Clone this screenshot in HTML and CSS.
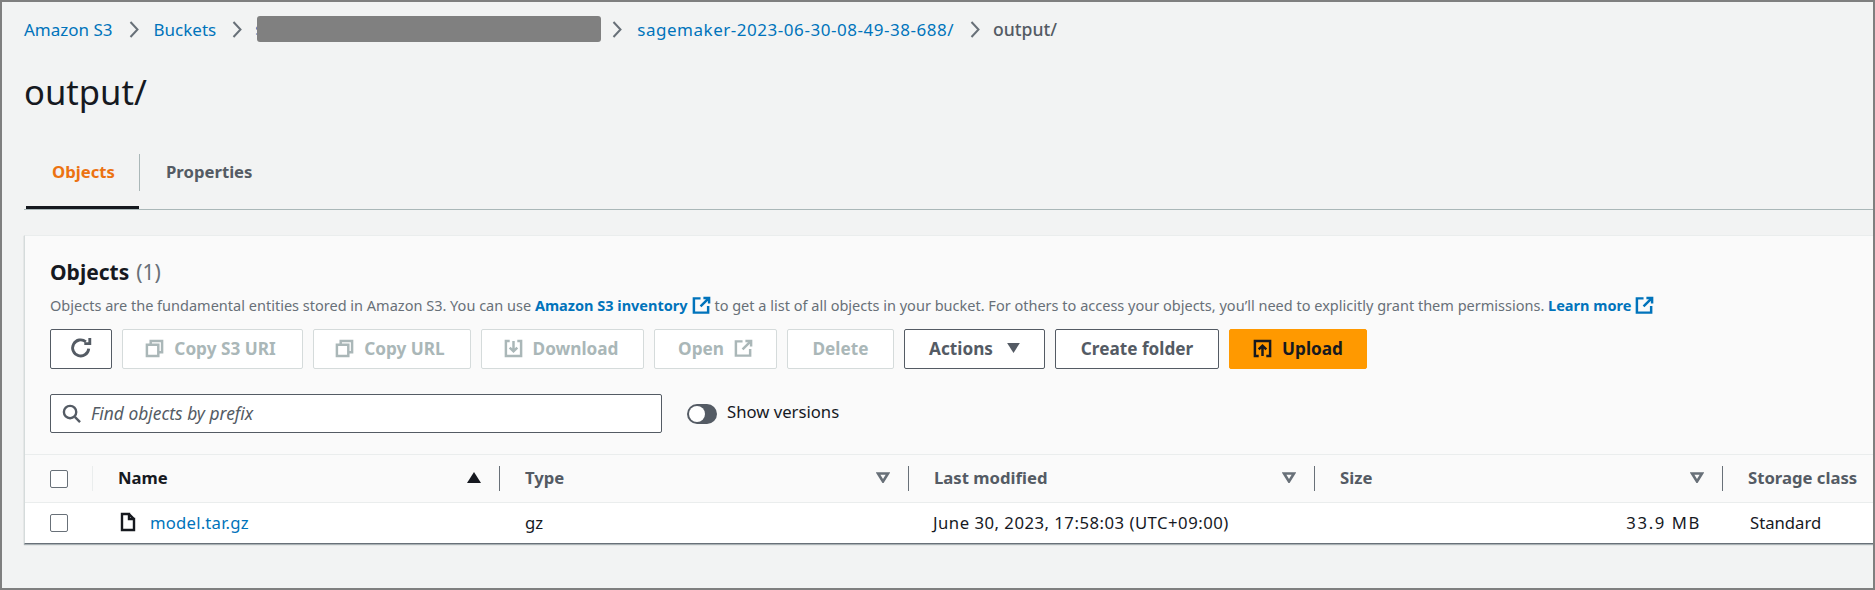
FILE: index.html
```html
<!DOCTYPE html>
<html lang="en">
<head>
<meta charset="utf-8">
<title>output/ - S3 bucket</title>
<link rel="stylesheet" href="styles.css">
</head>
<body>
<div class="frame">
  <nav class="crumbs">
    <a class="link">Amazon S3</a>
    <svg class="chev" viewBox="0 0 10 17"><path d="M1.5 1l7 7.5-7 7.5"/></svg>
    <a class="link">Buckets</a>
    <svg class="chev" viewBox="0 0 10 17"><path d="M1.5 1l7 7.5-7 7.5"/></svg>
    <span class="redact-wrap"><a class="link">s</a><span class="redact"></span></span>
    <svg class="chev" viewBox="0 0 10 17"><path d="M1.5 1l7 7.5-7 7.5"/></svg>
    <a class="link link-wide">sagemaker-2023-06-30-08-49-38-688/</a>
    <svg class="chev" viewBox="0 0 10 17"><path d="M1.5 1l7 7.5-7 7.5"/></svg>
    <span class="crumb-current">output/</span>
  </nav>
  <h1 class="title">output/</h1>
  <div class="tabs">
    <div class="tab tab-active"><span class="tab-label">Objects</span></div>
    <div class="tab"><span class="tab-label tab-next">Properties</span></div>
  </div>
  <section class="card">
    <div class="card-head">
      <h2 class="heading">Objects <span class="count">(1)</span></h2>
      <p class="desc">Objects are the fundamental entities stored in Amazon S3. You can use <a class="strong-link">Amazon S3 inventory</a><svg class="ext" viewBox="0 0 20 20"><path d="M9 2.5H2v15h15v-7M12 2h6v6M18 2L9 11"/></svg> to get a list of all objects in your bucket. For others to access your objects, you’ll need to explicitly grant them permissions. <a class="strong-link">Learn more</a><svg class="ext" viewBox="0 0 20 20"><path d="M9 2.5H2v15h15v-7M12 2h6v6M18 2L9 11"/></svg></p>
      <div class="actions">
        <button class="btn btn-icon"><svg class="ico ico-refresh" viewBox="0 0 20 20"><path d="M17 10.5a7.3 7.3 0 1 1-2.6-6.2M18 1v5h-5"/></svg></button>
        <button class="btn off w-s3"><svg class="ico" viewBox="0 0 20 20"><path d="M2 6h12v12H2zM6 6V2h12v12h-4"/></svg>Copy S3 URI</button>
        <button class="btn off w-url"><svg class="ico" viewBox="0 0 20 20"><path d="M2 6h12v12H2zM6 6V2h12v12h-4"/></svg>Copy URL</button>
        <button class="btn off w-dl"><svg class="ico" viewBox="0 0 20 20"><path d="M6 2H2v16h16V2h-4M10 2v11M6 9l4 4 4-4"/></svg>Download</button>
        <button class="btn off w-open">Open<svg class="ico" viewBox="0 0 20 20"><path d="M9 2.5H2v15h15v-7M12 2h6v6M18 2L9 11"/></svg></button>
        <button class="btn off w-del">Delete</button>
        <button class="btn on w-act">Actions<svg class="caret" viewBox="0 0 14 11"><path d="M0 0h14L7 11z"/></svg></button>
        <button class="btn on w-new">Create folder</button>
        <button class="btn primary w-up"><svg class="ico" viewBox="0 0 20 20"><path d="M6 18H2V2h16v16h-4M10 18V7M6 11l4-4 4 4"/></svg>Upload</button>
      </div>
      <div class="filters">
        <div class="search">
          <svg class="search-ico" viewBox="0 0 20 20"><circle cx="8.5" cy="8.5" r="6.5"/><path d="M13.5 13.5L19 19"/></svg>
          <span class="placeholder">Find objects by prefix</span>
        </div>
        <div class="toggle"><span class="knob"></span></div>
        <span class="toggle-label">Show versions</span>
      </div>
    </div>
    <div class="row thead">
      <div class="cell c-check"><span class="check"></span></div>
      <div class="cell c-name th-main">Name<svg class="sort" viewBox="0 0 14 11"><path d="M7 0l7 11H0z"/></svg></div>
      <div class="cell th">Type<svg class="filter" viewBox="0 0 14 11"><path d="M2 1.5h10L7 9.5z"/></svg></div>
      <div class="cell th">Last modified<svg class="filter" viewBox="0 0 14 11"><path d="M2 1.5h10L7 9.5z"/></svg></div>
      <div class="cell th">Size<svg class="filter" viewBox="0 0 14 11"><path d="M2 1.5h10L7 9.5z"/></svg></div>
      <div class="cell th last">Storage class</div>
    </div>
    <div class="row tbody">
      <div class="cell c-check plain"><span class="check"></span></div>
      <div class="cell c-file plain"><svg class="file" viewBox="0 0 16 20"><path d="M2 2h7v5h5v11H2zM9 2l5 5"/></svg><a class="link link-file">model.tar.gz</a></div>
      <div class="cell plain td">gz</div>
      <div class="cell plain td td-date">June 30, 2023, 17:58:03 (UTC+09:00)</div>
      <div class="cell plain td td-right">33.9 MB</div>
      <div class="cell plain td td-last">Standard</div>
    </div>
  </section>
</div>
</body>
</html>
```
FILE: styles.css
```css
* { box-sizing: border-box; }
html, body { margin: 0; padding: 0; }
body { font-family: "Noto Sans", "Liberation Sans", sans-serif; font-size: 16.7px; color: #16191f; }
.frame {
  width: 1875px; height: 590px; overflow: hidden;
  border: 2px solid #7f7f7f; background: #f2f3f3;
  padding: 14px 0 0 22px;
}
.link { color: #0073bb; white-space: nowrap; }
.link-file { letter-spacing: .2px; }
.crumbs { display: flex; align-items: center; height: 26px; font-size: 17px; }
.chev { width: 10px; height: 17px; margin: 0 15px 0 16px; flex: none; }
.chev path { fill: none; stroke: #687078; stroke-width: 2; }
.link-wide { letter-spacing: .53px; }
.redact-wrap { position: relative; width: 341px; height: 26px; line-height: 26px; margin-left: -2px; }
.redact { position: absolute; left: 2px; top: 0; width: 344px; height: 26px; background: #808080; border-radius: 3px; }
.crumb-current { color: #545b64; font-weight: 500; font-size: 17.6px; margin-left: -2px; }
.title { margin: 28px 0 0; height: 44px; font-size: 34.6px; line-height: 44px; font-weight: 400; }
.tabs { margin-top: 29px; height: 67px; display: flex; border-bottom: 1px solid #aab7b8; padding-left: 2px; }
.tab { height: 66px; padding: 11px 0 0; font-weight: 700; color: #545b64; }
.tab-active { width: 113px; border-bottom: 3px solid #16191f; color: #ec7211; }
.tab-label { display: flex; align-items: center; height: 37px; padding: 0 0 2px 26px; }
.tab-next { border-left: 1px solid #aab7b8; }
.card {
  margin-top: 25px; background: #fafafa; height: 309px;
  border-top: 1px solid #eaeded; border-left: 1px solid #d5dbdb;
  border-bottom: 1px solid #687078;
  box-shadow: 0 1px 1px rgba(0,28,36,.3);
}
.card-head { padding: 22px 0 0 25px; height: 218px; }
.heading { margin: 0; height: 28px; line-height: 28px; font-size: 21px; font-weight: 700; word-spacing: 1.5px; }
.count { font-weight: 400; color: #687078; }
.desc { margin: 8px 0 0; height: 24px; line-height: 22px; font-size: 14.53px; color: #687078; white-space: nowrap; }
.strong-link { color: #0073bb; font-weight: 700; }
.ext { width: 19px; height: 19px; vertical-align: -4px; margin-left: 4px; }
.ext path { fill: none; stroke: #0073bb; stroke-width: 2.6; }
.actions { margin-top: 11px; display: flex; gap: 10px; height: 40px; }
.btn {
  height: 40px; padding: 0 0 2px; display: flex; align-items: center; justify-content: center; gap: 10px;
  font: 700 17.2px "Noto Sans", "Liberation Sans", sans-serif; border-radius: 2px; background: transparent;
  border: 1px solid #545b64; color: #545b64;
}
.btn-icon { width: 62px; background: #fff; }
.ico { width: 19px; height: 19px; flex: none; }
.ico path { fill: none; stroke: currentColor; stroke-width: 2.6; }
.ico-refresh { width: 22px; height: 22px; }
.off { border-color: #d5dbdb; color: #aab7b8; background: #fff; }
.on { background: #fff; }
.primary { background: #f90; border-color: #f90; color: #16191f; }
.w-s3 { width: 181px; padding-right: 4px; } .w-url { width: 158px; padding-right: 4px; } .w-dl { width: 163px; padding-right: 3px; } .w-open { width: 123px; }
.w-del { width: 107px; } .w-act { width: 141px; gap: 14px; } .w-new { width: 164px; } .w-up { width: 138px; }
.caret { width: 13px; height: 10px; fill: #545b64; }
.filters { margin-top: 25px; display: flex; align-items: center; height: 39px; }
.search {
  width: 612px; height: 39px; background: #fff; border: 1px solid #545b64; border-radius: 2px;
  display: flex; align-items: center; padding: 0 0 1px 11px; gap: 10px;
}
.search-ico { width: 19px; height: 19px; flex: none; }
.search-ico circle, .search-ico path { fill: none; stroke: #545b64; stroke-width: 2.5; }
.placeholder { font-style: italic; color: #545b64; font-size: 17.4px; }
.toggle { width: 30px; height: 20px; margin-left: 25px; border-radius: 10px; background: #545b64; padding: 2px; }
.knob { display: block; width: 16px; height: 16px; border-radius: 50%; background: #fff; }
.toggle-label { margin: 0 0 4px 10px; }
.row { display: grid; grid-template-columns: 43px 407px 409px 406px 408px 1fr; padding-left: 25px; }
.thead { height: 49px; align-items: center; border-top: 1px solid #eaeded; border-bottom: 1px solid #eaeded; }
.tbody { height: 40px; align-items: center; background: #fff; }
.cell { display: flex; align-items: center; justify-content: space-between; height: 25px; border-right: 1px solid #687078; padding: 0 18px 2px 25px; white-space: nowrap; }
.thead .c-check { border-right-color: #eaeded; padding: 0; }
.check { display: block; width: 18px; height: 18px; background: #fff; border: 1px solid #687078; border-radius: 2px; }
.th, .th-main { font-weight: 700; }
.th { color: #545b64; }
.last { border-right: 0; }
.sort { width: 14px; height: 11px; fill: #16191f; }
.filter { width: 14px; height: 11px; }
.filter path { fill: none; stroke: #687078; stroke-width: 2.6; }
.plain { border-right: 0; height: 24px; }
.tbody .c-check { padding: 0; }
.c-file { justify-content: flex-start; padding-left: 27px; gap: 14px; }
.file { width: 16px; height: 20px; flex: none; }
.file path { fill: none; stroke: #16191f; stroke-width: 2.4; }
.td { justify-content: flex-start; color: #16191f; }
.td-date { padding-left: 24px; letter-spacing: .5px; }
.td-right { justify-content: flex-end; padding-right: 22px; letter-spacing: 1.6px; }
.td-last { padding-left: 27px; }
```
